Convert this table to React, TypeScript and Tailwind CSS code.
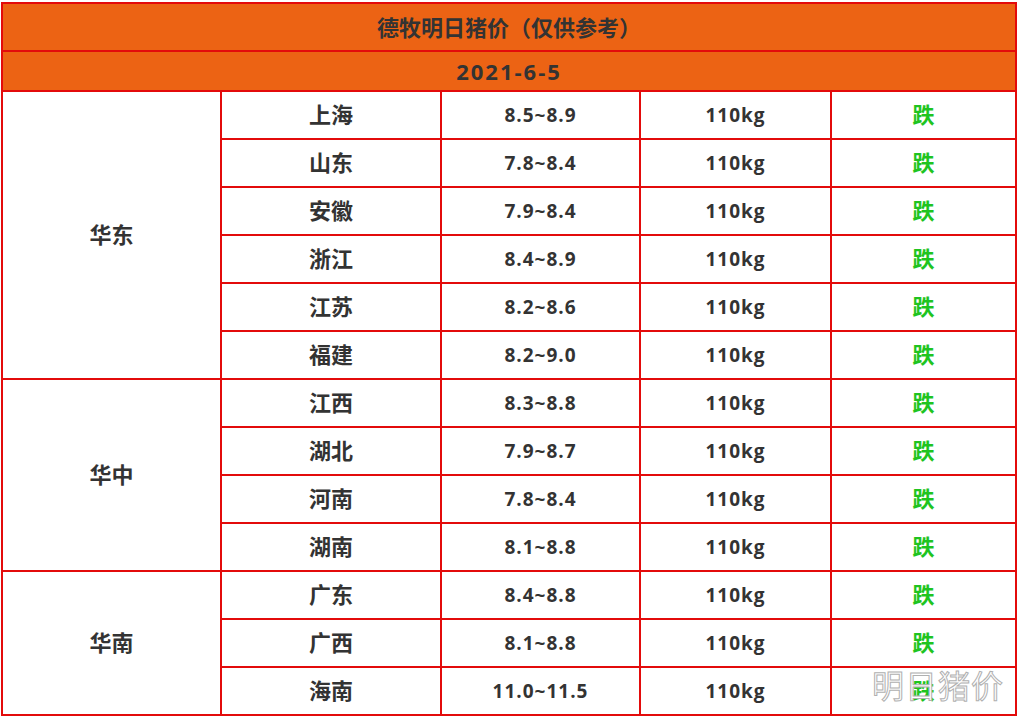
import React from 'react';

const regions: { name: string; rows: [string, string][] }[] = [
  {
    name: '华东',
    rows: [
      ['上海', '8.5~8.9'],
      ['山东', '7.8~8.4'],
      ['安徽', '7.9~8.4'],
      ['浙江', '8.4~8.9'],
      ['江苏', '8.2~8.6'],
      ['福建', '8.2~9.0'],
    ],
  },
  {
    name: '华中',
    rows: [
      ['江西', '8.3~8.8'],
      ['湖北', '7.9~8.7'],
      ['河南', '7.8~8.4'],
      ['湖南', '8.1~8.8'],
    ],
  },
  {
    name: '华南',
    rows: [
      ['广东', '8.4~8.8'],
      ['广西', '8.1~8.8'],
      ['海南', '11.0~11.5'],
    ],
  },
];

const cjk = "font-['Microsoft_YaHei','Noto_Sans_CJK_SC',sans-serif]";
const num = "font-['Open_Sans','Noto_Sans_CJK_SC',sans-serif]";
const cell = 'border-2 border-[#e30b0b] text-center align-middle p-0';

export default function App() {
  return (
    <div className="relative w-[1019px] h-[718px] overflow-hidden bg-white">
      <table className="ml-[1px] mt-[2px] w-[1014px] table-fixed text-[#333333]">
        <colgroup>
          <col className="w-[219px]" />
          <col className="w-[220px]" />
          <col className="w-[199px]" />
          <col className="w-[191px]" />
          <col className="w-[185px]" />
        </colgroup>
        <tbody>
          <tr className="h-[48px] bg-[#ec6314]">
            <td colSpan={5} className={`${cell} ${cjk} text-[22px] font-bold pb-[2px]`}>
              德牧明日猪价（仅供参考）
            </td>
          </tr>
          <tr className="h-[40px] bg-[#ec6314]">
            <td colSpan={5} className={`${cell} ${num} text-[22px] font-bold tracking-[2px]`}>
              2021-6-5
            </td>
          </tr>
          {regions.map((r) =>
            r.rows.map(([prov, price], i) => (
              <tr key={prov} className="h-[48px]">
                {i === 0 && (
                  <td rowSpan={r.rows.length} className={`${cell} ${cjk} text-[22px] font-bold pb-[3px]`}>
                    {r.name}
                  </td>
                )}
                <td className={`${cell} ${cjk} text-[22px] font-bold pb-[3px]`}>{prov}</td>
                <td className={`${cell} ${num} text-[19px] font-bold tracking-[1px]`}>{price}</td>
                <td className={`${cell} ${num} text-[19px] font-bold tracking-[1px]`}>110kg</td>
                <td className={`${cell} ${cjk} text-[22px] font-bold text-[#1fc41f] pb-[3px]`}>跌</td>
              </tr>
            ))
          )}
        </tbody>
      </table>
      <div
        className={`absolute left-[872px] top-[660px] ${cjk} text-[32px] tracking-[1px] text-white [-webkit-text-stroke:1px_#b0b0b0]`}
      >
        明日猪价
      </div>
    </div>
  );
}
